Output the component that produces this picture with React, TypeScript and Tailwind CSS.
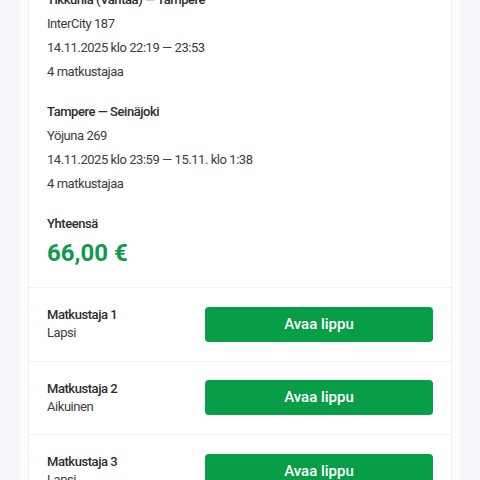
const legs = [
  {
    title: "Tikkurila (Vantaa) — Tampere",
    train: "InterCity 187",
    time: "14.11.2025 klo 22:19 — 23:53",
    pax: "4 matkustajaa",
  },
  {
    title: "Tampere — Seinäjoki",
    train: "Yöjuna 269",
    time: "14.11.2025 klo 23:59 — 15.11. klo 1:38",
    pax: "4 matkustajaa",
  },
];

const passengers = [
  { name: "Matkustaja 1", type: "Lapsi" },
  { name: "Matkustaja 2", type: "Aikuinen" },
  { name: "Matkustaja 3", type: "Lapsi" },
];

export default function App() {
  return (
    <div
      className="h-[480px] overflow-hidden bg-[#f6f6fc] px-[20px]"
      style={{ fontFamily: "Roboto, 'Liberation Sans', sans-serif" }}
    >
      <div className="bg-[#fcfcfd] px-[8px]">
        <div className="border-x border-[#efeff1] bg-white pb-[40px]">
          <div className="-mt-[12px] px-[18px] pb-[18px]">
            {legs.map((leg) => (
              <div
                key={leg.title}
                className="mb-[16px] text-[13px] leading-[24px] tracking-[-0.45px] text-[#3d3d3d]"
              >
                <div className="font-medium text-[#2e2e2e]">{leg.title}</div>
                <div>{leg.train}</div>
                <div>{leg.time}</div>
                <div>{leg.pax}</div>
              </div>
            ))}
            <div className="text-[13px] font-medium leading-[24px] tracking-[-0.45px] text-[#2e2e2e]">
              Yhteensä
            </div>
            <div className="mt-[1px] text-[24px] font-bold leading-[32px] text-[#0f9a4c]">66,00 €</div>
          </div>
          {passengers.map((p) => (
            <div
              key={p.name}
              className="flex items-center border-t border-[#f0f0f2] px-[18px] pt-[18px] pb-[18.5px]"
            >
              <div className="flex-1 text-[13px] leading-[18px] tracking-[-0.45px]">
                <div className="font-medium text-[#2e2e2e]">{p.name}</div>
                <div className="text-[#3d3d3d]">{p.type}</div>
              </div>
              <button className="h-[35px] w-[228px] rounded-[4px] bg-[#079e47] text-[15px] font-medium text-white">
                Avaa lippu
              </button>
            </div>
          ))}
        </div>
      </div>
    </div>
  );
}
